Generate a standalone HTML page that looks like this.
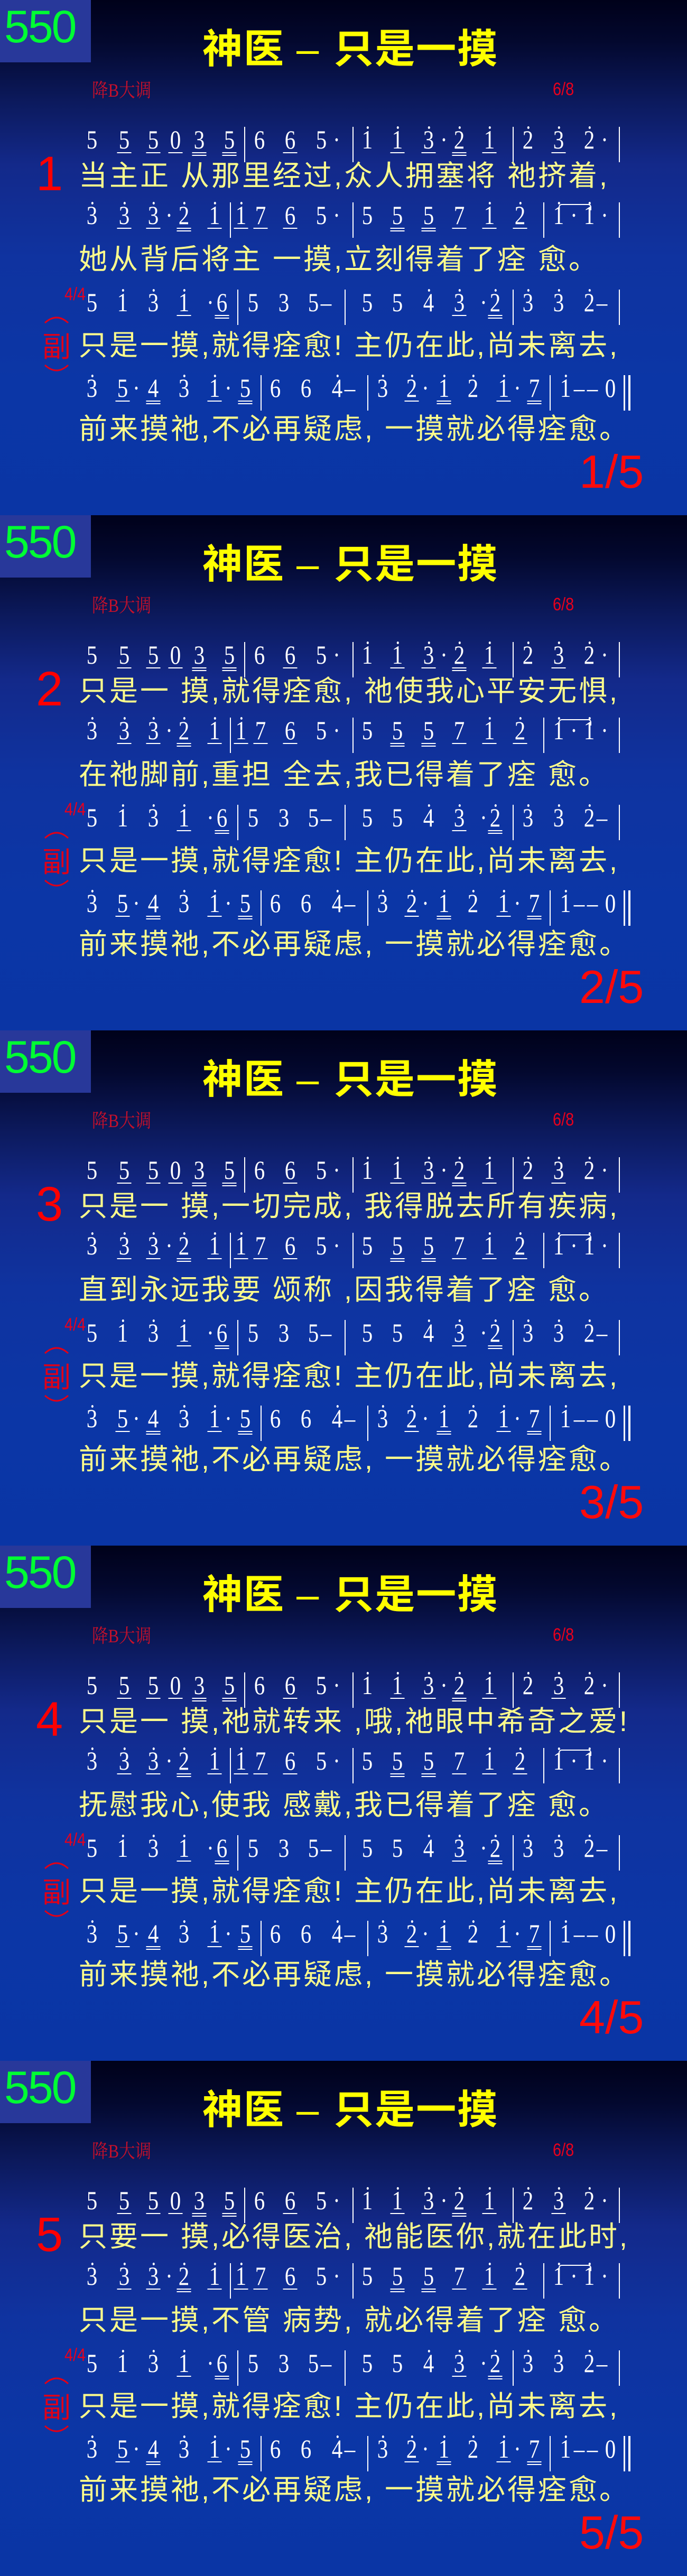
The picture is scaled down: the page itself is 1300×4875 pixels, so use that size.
<!DOCTYPE html>
<html><head><meta charset="utf-8">
<style>
*{margin:0;padding:0}
body{width:1300px;height:4875px;background:#0a3399;overflow:hidden}
.s{position:relative;width:1300px;height:975px;overflow:hidden;
background:linear-gradient(180deg,#00011a 0%,#03082e 8%,#0c1a5e 20%,#13298a 32%,#0f33a0 50%,#0b36a6 75%,#0a35a5 100%)}
.badge{position:absolute;left:0;top:0;width:172px;height:118px;background:#28389a}
.badge span{position:absolute;left:8px;top:8px;font:86px/1 "Liberation Sans",sans-serif;color:#00ff33;letter-spacing:-3px}
.title{position:absolute;left:383px;top:52px;font:bold 76px/1.1 "Liberation Sans","Noto Sans CJK SC",sans-serif;color:#ffff00;white-space:pre;letter-spacing:2px}
.title .dash{font-weight:normal;display:inline-block;margin:0 26px 0 22px}
.key{position:absolute;left:174px;top:150px;font:36px/1.2 "Liberation Serif","Noto Serif CJK SC",serif;color:#c8102a;transform:scaleX(.85);transform-origin:left}
.tm{position:absolute;font:34px/1 "Liberation Sans",sans-serif;color:#e8001c;transform:scaleX(.85);transform-origin:left}
.vn{position:absolute;left:68px;top:283px;font:92px/1 "Liberation Sans",sans-serif;color:#ff0000}
.pg{position:absolute;left:1096px;top:849px;font:88px/1 "Liberation Sans",sans-serif;color:#ff0a0a}
.ly{position:absolute;left:149px;font:54px/54px "Liberation Sans","Noto Sans CJK SC",sans-serif;color:#fbfb8c;white-space:pre;letter-spacing:4px}
.r{position:absolute;left:0;width:1300px;height:70px}
.r b{position:absolute;top:0;font:normal 50px/1 "Liberation Serif",serif;color:#fff;transform:translateX(-50%) scaleX(.82)}
.r b.h::before{content:"";position:absolute;left:50%;top:0px;width:5px;height:5px;margin-left:-2px;border-radius:50%;background:#fff}
.r b.u::after,.r b.d::after{content:"";position:absolute;left:-4px;right:-4px;top:49px;height:2px;background:#fff}
.r b.d::after{height:7px;background:linear-gradient(#fff 0,#fff 2px,transparent 2px,transparent 5px,#fff 5px)}
.r i{position:absolute;top:1px;width:2px;height:67px;background:#fff}
.tie{position:absolute;top:4px;left:1057px;width:58px;height:10px;border:2px solid #fff;border-bottom:none;border-radius:6px 6px 0 0}
.fu{position:absolute;left:79px;top:595px;width:56px;height:112px}
</style></head><body>

<div class="s">
<div class="badge"><span>550</span></div>
<div class="title">神医<span class="dash">–</span>只是一摸</div>
<div class="key">降B大调</div>
<div class="tm" style="left:1046px;top:152px">6/8</div>
<div class="vn">1</div>
<div class="r" style="top:239px"><b style="left:174px">5</b><b class="u" style="left:235px">5</b><b class="u" style="left:290px">5</b><b class="u" style="left:332px">0</b><b class="d" style="left:377px">3</b><b class="d" style="left:434px">5</b><i style="left:462px"></i><b style="left:491px">6</b><b class="u" style="left:549px">6</b><b style="left:608px">5</b><b style="left:637px">·</b><i style="left:667px"></i><b class="h" style="left:695px">1</b><b class="h u" style="left:752px">1</b><b class="h u" style="left:811px">3</b><b style="left:840px">·</b><b class="h d" style="left:869px">2</b><b class="h u" style="left:926px">1</b><i style="left:970px"></i><b class="h" style="left:999px">2</b><b class="h u" style="left:1057px">3</b><b class="h" style="left:1115px">2</b><b style="left:1144px">·</b><i style="left:1171px"></i></div>
<div class="ly" style="top:306px">当主正 从那里经过,众人拥塞将 祂挤着,</div>
<div class="r" style="top:382px"><b class="h" style="left:174px">3</b><b class="h u" style="left:235px">3</b><b class="h u" style="left:290px">3</b><b style="left:320px">·</b><b class="h d" style="left:348px">2</b><b class="h u" style="left:406px">1</b><i style="left:435px"></i><b class="h u" style="left:456px">1</b><b class="u" style="left:493px">7</b><b class="u" style="left:549px">6</b><b style="left:608px">5</b><b style="left:637px">·</b><i style="left:667px"></i><b style="left:695px">5</b><b class="d" style="left:752px">5</b><b class="d" style="left:811px">5</b><b class="u" style="left:869px">7</b><b class="h u" style="left:926px">1</b><b class="h u" style="left:984px">2</b><i style="left:1028px"></i><b class="h" style="left:1057px">1</b><b style="left:1086px">·</b><b class="h" style="left:1115px">1</b><b style="left:1144px">·</b><i style="left:1171px"></i><div class="tie"></div></div>
<div class="ly" style="top:464px">她从背后将主 一摸,立刻得着了痊 愈。</div>
<div class="tm" style="left:122px;top:540px">4/4</div>
<div class="r" style="top:547px"><b style="left:174px">5</b><b class="h" style="left:232px">1</b><b class="h" style="left:290px">3</b><b class="h u" style="left:348px">1</b><b style="left:398px">·</b><b class="d" style="left:420px">6</b><i style="left:449px"></i><b style="left:479px">5</b><b style="left:537px">3</b><b style="left:593px">5</b><b style="left:617px">–</b><i style="left:652px"></i><b style="left:695px">5</b><b style="left:752px">5</b><b class="h" style="left:811px">4</b><b class="h u" style="left:869px">3</b><b style="left:915px">·</b><b class="h d" style="left:937px">2</b><i style="left:970px"></i><b class="h" style="left:999px">3</b><b class="h" style="left:1057px">3</b><b class="h" style="left:1115px">2</b><b style="left:1139px">–</b><i style="left:1171px"></i></div>
<svg class="fu" viewBox="0 0 56 112"><path d="M6 16 Q28 -4 50 16" fill="none" stroke="#e00018" stroke-width="3"/><path d="M6 96 Q28 116 50 96" fill="none" stroke="#e00018" stroke-width="3"/><text x="28" y="80" text-anchor="middle" font-family="Noto Sans CJK SC,sans-serif" font-size="54" fill="#e00018">副</text></svg>
<div class="ly" style="top:627px">只是一摸,就得痊愈! 主仍在此,尚未离去,</div>
<div class="r" style="top:709px"><b class="h" style="left:174px">3</b><b class="u" style="left:232px">5</b><b style="left:258px">·</b><b class="d" style="left:290px">4</b><b class="h" style="left:348px">3</b><b class="h u" style="left:406px">1</b><b style="left:432px">·</b><b class="d" style="left:464px">5</b><i style="left:493px"></i><b style="left:521px">6</b><b style="left:579px">6</b><b class="h" style="left:638px">4</b><b style="left:662px">–</b><i style="left:695px"></i><b class="h" style="left:724px">3</b><b class="h u" style="left:779px">2</b><b style="left:805px">·</b><b class="h d" style="left:840px">1</b><b class="h" style="left:895px">2</b><b class="h u" style="left:953px">1</b><b style="left:979px">·</b><b class="d" style="left:1011px">7</b><i style="left:1040px"></i><b class="h" style="left:1070px">1</b><b style="left:1096px">–</b><b style="left:1121px">–</b><b style="left:1155px">0</b><i style="left:1180px;width:3px"></i><i style="left:1189px;width:4px"></i></div>
<div class="ly" style="top:785px">前来摸祂,不必再疑虑, 一摸就必得痊愈。</div>
<div class="pg">1/5</div>
</div>

<div class="s">
<div class="badge"><span>550</span></div>
<div class="title">神医<span class="dash">–</span>只是一摸</div>
<div class="key">降B大调</div>
<div class="tm" style="left:1046px;top:152px">6/8</div>
<div class="vn">2</div>
<div class="r" style="top:239px"><b style="left:174px">5</b><b class="u" style="left:235px">5</b><b class="u" style="left:290px">5</b><b class="u" style="left:332px">0</b><b class="d" style="left:377px">3</b><b class="d" style="left:434px">5</b><i style="left:462px"></i><b style="left:491px">6</b><b class="u" style="left:549px">6</b><b style="left:608px">5</b><b style="left:637px">·</b><i style="left:667px"></i><b class="h" style="left:695px">1</b><b class="h u" style="left:752px">1</b><b class="h u" style="left:811px">3</b><b style="left:840px">·</b><b class="h d" style="left:869px">2</b><b class="h u" style="left:926px">1</b><i style="left:970px"></i><b class="h" style="left:999px">2</b><b class="h u" style="left:1057px">3</b><b class="h" style="left:1115px">2</b><b style="left:1144px">·</b><i style="left:1171px"></i></div>
<div class="ly" style="top:306px">只是一 摸,就得痊愈, 祂使我心平安无惧,</div>
<div class="r" style="top:382px"><b class="h" style="left:174px">3</b><b class="h u" style="left:235px">3</b><b class="h u" style="left:290px">3</b><b style="left:320px">·</b><b class="h d" style="left:348px">2</b><b class="h u" style="left:406px">1</b><i style="left:435px"></i><b class="h u" style="left:456px">1</b><b class="u" style="left:493px">7</b><b class="u" style="left:549px">6</b><b style="left:608px">5</b><b style="left:637px">·</b><i style="left:667px"></i><b style="left:695px">5</b><b class="d" style="left:752px">5</b><b class="d" style="left:811px">5</b><b class="u" style="left:869px">7</b><b class="h u" style="left:926px">1</b><b class="h u" style="left:984px">2</b><i style="left:1028px"></i><b class="h" style="left:1057px">1</b><b style="left:1086px">·</b><b class="h" style="left:1115px">1</b><b style="left:1144px">·</b><i style="left:1171px"></i><div class="tie"></div></div>
<div class="ly" style="top:464px">在祂脚前,重担 全去,我已得着了痊 愈。</div>
<div class="tm" style="left:122px;top:540px">4/4</div>
<div class="r" style="top:547px"><b style="left:174px">5</b><b class="h" style="left:232px">1</b><b class="h" style="left:290px">3</b><b class="h u" style="left:348px">1</b><b style="left:398px">·</b><b class="d" style="left:420px">6</b><i style="left:449px"></i><b style="left:479px">5</b><b style="left:537px">3</b><b style="left:593px">5</b><b style="left:617px">–</b><i style="left:652px"></i><b style="left:695px">5</b><b style="left:752px">5</b><b class="h" style="left:811px">4</b><b class="h u" style="left:869px">3</b><b style="left:915px">·</b><b class="h d" style="left:937px">2</b><i style="left:970px"></i><b class="h" style="left:999px">3</b><b class="h" style="left:1057px">3</b><b class="h" style="left:1115px">2</b><b style="left:1139px">–</b><i style="left:1171px"></i></div>
<svg class="fu" viewBox="0 0 56 112"><path d="M6 16 Q28 -4 50 16" fill="none" stroke="#e00018" stroke-width="3"/><path d="M6 96 Q28 116 50 96" fill="none" stroke="#e00018" stroke-width="3"/><text x="28" y="80" text-anchor="middle" font-family="Noto Sans CJK SC,sans-serif" font-size="54" fill="#e00018">副</text></svg>
<div class="ly" style="top:627px">只是一摸,就得痊愈! 主仍在此,尚未离去,</div>
<div class="r" style="top:709px"><b class="h" style="left:174px">3</b><b class="u" style="left:232px">5</b><b style="left:258px">·</b><b class="d" style="left:290px">4</b><b class="h" style="left:348px">3</b><b class="h u" style="left:406px">1</b><b style="left:432px">·</b><b class="d" style="left:464px">5</b><i style="left:493px"></i><b style="left:521px">6</b><b style="left:579px">6</b><b class="h" style="left:638px">4</b><b style="left:662px">–</b><i style="left:695px"></i><b class="h" style="left:724px">3</b><b class="h u" style="left:779px">2</b><b style="left:805px">·</b><b class="h d" style="left:840px">1</b><b class="h" style="left:895px">2</b><b class="h u" style="left:953px">1</b><b style="left:979px">·</b><b class="d" style="left:1011px">7</b><i style="left:1040px"></i><b class="h" style="left:1070px">1</b><b style="left:1096px">–</b><b style="left:1121px">–</b><b style="left:1155px">0</b><i style="left:1180px;width:3px"></i><i style="left:1189px;width:4px"></i></div>
<div class="ly" style="top:785px">前来摸祂,不必再疑虑, 一摸就必得痊愈。</div>
<div class="pg">2/5</div>
</div>

<div class="s">
<div class="badge"><span>550</span></div>
<div class="title">神医<span class="dash">–</span>只是一摸</div>
<div class="key">降B大调</div>
<div class="tm" style="left:1046px;top:152px">6/8</div>
<div class="vn">3</div>
<div class="r" style="top:239px"><b style="left:174px">5</b><b class="u" style="left:235px">5</b><b class="u" style="left:290px">5</b><b class="u" style="left:332px">0</b><b class="d" style="left:377px">3</b><b class="d" style="left:434px">5</b><i style="left:462px"></i><b style="left:491px">6</b><b class="u" style="left:549px">6</b><b style="left:608px">5</b><b style="left:637px">·</b><i style="left:667px"></i><b class="h" style="left:695px">1</b><b class="h u" style="left:752px">1</b><b class="h u" style="left:811px">3</b><b style="left:840px">·</b><b class="h d" style="left:869px">2</b><b class="h u" style="left:926px">1</b><i style="left:970px"></i><b class="h" style="left:999px">2</b><b class="h u" style="left:1057px">3</b><b class="h" style="left:1115px">2</b><b style="left:1144px">·</b><i style="left:1171px"></i></div>
<div class="ly" style="top:306px">只是一 摸,一切完成, 我得脱去所有疾病,</div>
<div class="r" style="top:382px"><b class="h" style="left:174px">3</b><b class="h u" style="left:235px">3</b><b class="h u" style="left:290px">3</b><b style="left:320px">·</b><b class="h d" style="left:348px">2</b><b class="h u" style="left:406px">1</b><i style="left:435px"></i><b class="h u" style="left:456px">1</b><b class="u" style="left:493px">7</b><b class="u" style="left:549px">6</b><b style="left:608px">5</b><b style="left:637px">·</b><i style="left:667px"></i><b style="left:695px">5</b><b class="d" style="left:752px">5</b><b class="d" style="left:811px">5</b><b class="u" style="left:869px">7</b><b class="h u" style="left:926px">1</b><b class="h u" style="left:984px">2</b><i style="left:1028px"></i><b class="h" style="left:1057px">1</b><b style="left:1086px">·</b><b class="h" style="left:1115px">1</b><b style="left:1144px">·</b><i style="left:1171px"></i><div class="tie"></div></div>
<div class="ly" style="top:464px">直到永远我要 颂称 ,因我得着了痊 愈。</div>
<div class="tm" style="left:122px;top:540px">4/4</div>
<div class="r" style="top:547px"><b style="left:174px">5</b><b class="h" style="left:232px">1</b><b class="h" style="left:290px">3</b><b class="h u" style="left:348px">1</b><b style="left:398px">·</b><b class="d" style="left:420px">6</b><i style="left:449px"></i><b style="left:479px">5</b><b style="left:537px">3</b><b style="left:593px">5</b><b style="left:617px">–</b><i style="left:652px"></i><b style="left:695px">5</b><b style="left:752px">5</b><b class="h" style="left:811px">4</b><b class="h u" style="left:869px">3</b><b style="left:915px">·</b><b class="h d" style="left:937px">2</b><i style="left:970px"></i><b class="h" style="left:999px">3</b><b class="h" style="left:1057px">3</b><b class="h" style="left:1115px">2</b><b style="left:1139px">–</b><i style="left:1171px"></i></div>
<svg class="fu" viewBox="0 0 56 112"><path d="M6 16 Q28 -4 50 16" fill="none" stroke="#e00018" stroke-width="3"/><path d="M6 96 Q28 116 50 96" fill="none" stroke="#e00018" stroke-width="3"/><text x="28" y="80" text-anchor="middle" font-family="Noto Sans CJK SC,sans-serif" font-size="54" fill="#e00018">副</text></svg>
<div class="ly" style="top:627px">只是一摸,就得痊愈! 主仍在此,尚未离去,</div>
<div class="r" style="top:709px"><b class="h" style="left:174px">3</b><b class="u" style="left:232px">5</b><b style="left:258px">·</b><b class="d" style="left:290px">4</b><b class="h" style="left:348px">3</b><b class="h u" style="left:406px">1</b><b style="left:432px">·</b><b class="d" style="left:464px">5</b><i style="left:493px"></i><b style="left:521px">6</b><b style="left:579px">6</b><b class="h" style="left:638px">4</b><b style="left:662px">–</b><i style="left:695px"></i><b class="h" style="left:724px">3</b><b class="h u" style="left:779px">2</b><b style="left:805px">·</b><b class="h d" style="left:840px">1</b><b class="h" style="left:895px">2</b><b class="h u" style="left:953px">1</b><b style="left:979px">·</b><b class="d" style="left:1011px">7</b><i style="left:1040px"></i><b class="h" style="left:1070px">1</b><b style="left:1096px">–</b><b style="left:1121px">–</b><b style="left:1155px">0</b><i style="left:1180px;width:3px"></i><i style="left:1189px;width:4px"></i></div>
<div class="ly" style="top:785px">前来摸祂,不必再疑虑, 一摸就必得痊愈。</div>
<div class="pg">3/5</div>
</div>

<div class="s">
<div class="badge"><span>550</span></div>
<div class="title">神医<span class="dash">–</span>只是一摸</div>
<div class="key">降B大调</div>
<div class="tm" style="left:1046px;top:152px">6/8</div>
<div class="vn">4</div>
<div class="r" style="top:239px"><b style="left:174px">5</b><b class="u" style="left:235px">5</b><b class="u" style="left:290px">5</b><b class="u" style="left:332px">0</b><b class="d" style="left:377px">3</b><b class="d" style="left:434px">5</b><i style="left:462px"></i><b style="left:491px">6</b><b class="u" style="left:549px">6</b><b style="left:608px">5</b><b style="left:637px">·</b><i style="left:667px"></i><b class="h" style="left:695px">1</b><b class="h u" style="left:752px">1</b><b class="h u" style="left:811px">3</b><b style="left:840px">·</b><b class="h d" style="left:869px">2</b><b class="h u" style="left:926px">1</b><i style="left:970px"></i><b class="h" style="left:999px">2</b><b class="h u" style="left:1057px">3</b><b class="h" style="left:1115px">2</b><b style="left:1144px">·</b><i style="left:1171px"></i></div>
<div class="ly" style="top:306px">只是一 摸,祂就转来 ,哦,祂眼中希奇之爱!</div>
<div class="r" style="top:382px"><b class="h" style="left:174px">3</b><b class="h u" style="left:235px">3</b><b class="h u" style="left:290px">3</b><b style="left:320px">·</b><b class="h d" style="left:348px">2</b><b class="h u" style="left:406px">1</b><i style="left:435px"></i><b class="h u" style="left:456px">1</b><b class="u" style="left:493px">7</b><b class="u" style="left:549px">6</b><b style="left:608px">5</b><b style="left:637px">·</b><i style="left:667px"></i><b style="left:695px">5</b><b class="d" style="left:752px">5</b><b class="d" style="left:811px">5</b><b class="u" style="left:869px">7</b><b class="h u" style="left:926px">1</b><b class="h u" style="left:984px">2</b><i style="left:1028px"></i><b class="h" style="left:1057px">1</b><b style="left:1086px">·</b><b class="h" style="left:1115px">1</b><b style="left:1144px">·</b><i style="left:1171px"></i><div class="tie"></div></div>
<div class="ly" style="top:464px">抚慰我心,使我 感戴,我已得着了痊 愈。</div>
<div class="tm" style="left:122px;top:540px">4/4</div>
<div class="r" style="top:547px"><b style="left:174px">5</b><b class="h" style="left:232px">1</b><b class="h" style="left:290px">3</b><b class="h u" style="left:348px">1</b><b style="left:398px">·</b><b class="d" style="left:420px">6</b><i style="left:449px"></i><b style="left:479px">5</b><b style="left:537px">3</b><b style="left:593px">5</b><b style="left:617px">–</b><i style="left:652px"></i><b style="left:695px">5</b><b style="left:752px">5</b><b class="h" style="left:811px">4</b><b class="h u" style="left:869px">3</b><b style="left:915px">·</b><b class="h d" style="left:937px">2</b><i style="left:970px"></i><b class="h" style="left:999px">3</b><b class="h" style="left:1057px">3</b><b class="h" style="left:1115px">2</b><b style="left:1139px">–</b><i style="left:1171px"></i></div>
<svg class="fu" viewBox="0 0 56 112"><path d="M6 16 Q28 -4 50 16" fill="none" stroke="#e00018" stroke-width="3"/><path d="M6 96 Q28 116 50 96" fill="none" stroke="#e00018" stroke-width="3"/><text x="28" y="80" text-anchor="middle" font-family="Noto Sans CJK SC,sans-serif" font-size="54" fill="#e00018">副</text></svg>
<div class="ly" style="top:627px">只是一摸,就得痊愈! 主仍在此,尚未离去,</div>
<div class="r" style="top:709px"><b class="h" style="left:174px">3</b><b class="u" style="left:232px">5</b><b style="left:258px">·</b><b class="d" style="left:290px">4</b><b class="h" style="left:348px">3</b><b class="h u" style="left:406px">1</b><b style="left:432px">·</b><b class="d" style="left:464px">5</b><i style="left:493px"></i><b style="left:521px">6</b><b style="left:579px">6</b><b class="h" style="left:638px">4</b><b style="left:662px">–</b><i style="left:695px"></i><b class="h" style="left:724px">3</b><b class="h u" style="left:779px">2</b><b style="left:805px">·</b><b class="h d" style="left:840px">1</b><b class="h" style="left:895px">2</b><b class="h u" style="left:953px">1</b><b style="left:979px">·</b><b class="d" style="left:1011px">7</b><i style="left:1040px"></i><b class="h" style="left:1070px">1</b><b style="left:1096px">–</b><b style="left:1121px">–</b><b style="left:1155px">0</b><i style="left:1180px;width:3px"></i><i style="left:1189px;width:4px"></i></div>
<div class="ly" style="top:785px">前来摸祂,不必再疑虑, 一摸就必得痊愈。</div>
<div class="pg">4/5</div>
</div>

<div class="s">
<div class="badge"><span>550</span></div>
<div class="title">神医<span class="dash">–</span>只是一摸</div>
<div class="key">降B大调</div>
<div class="tm" style="left:1046px;top:152px">6/8</div>
<div class="vn">5</div>
<div class="r" style="top:239px"><b style="left:174px">5</b><b class="u" style="left:235px">5</b><b class="u" style="left:290px">5</b><b class="u" style="left:332px">0</b><b class="d" style="left:377px">3</b><b class="d" style="left:434px">5</b><i style="left:462px"></i><b style="left:491px">6</b><b class="u" style="left:549px">6</b><b style="left:608px">5</b><b style="left:637px">·</b><i style="left:667px"></i><b class="h" style="left:695px">1</b><b class="h u" style="left:752px">1</b><b class="h u" style="left:811px">3</b><b style="left:840px">·</b><b class="h d" style="left:869px">2</b><b class="h u" style="left:926px">1</b><i style="left:970px"></i><b class="h" style="left:999px">2</b><b class="h u" style="left:1057px">3</b><b class="h" style="left:1115px">2</b><b style="left:1144px">·</b><i style="left:1171px"></i></div>
<div class="ly" style="top:306px">只要一 摸,必得医治, 祂能医你,就在此时,</div>
<div class="r" style="top:382px"><b class="h" style="left:174px">3</b><b class="h u" style="left:235px">3</b><b class="h u" style="left:290px">3</b><b style="left:320px">·</b><b class="h d" style="left:348px">2</b><b class="h u" style="left:406px">1</b><i style="left:435px"></i><b class="h u" style="left:456px">1</b><b class="u" style="left:493px">7</b><b class="u" style="left:549px">6</b><b style="left:608px">5</b><b style="left:637px">·</b><i style="left:667px"></i><b style="left:695px">5</b><b class="d" style="left:752px">5</b><b class="d" style="left:811px">5</b><b class="u" style="left:869px">7</b><b class="h u" style="left:926px">1</b><b class="h u" style="left:984px">2</b><i style="left:1028px"></i><b class="h" style="left:1057px">1</b><b style="left:1086px">·</b><b class="h" style="left:1115px">1</b><b style="left:1144px">·</b><i style="left:1171px"></i><div class="tie"></div></div>
<div class="ly" style="top:464px">只是一摸,不管 病势, 就必得着了痊 愈。</div>
<div class="tm" style="left:122px;top:540px">4/4</div>
<div class="r" style="top:547px"><b style="left:174px">5</b><b class="h" style="left:232px">1</b><b class="h" style="left:290px">3</b><b class="h u" style="left:348px">1</b><b style="left:398px">·</b><b class="d" style="left:420px">6</b><i style="left:449px"></i><b style="left:479px">5</b><b style="left:537px">3</b><b style="left:593px">5</b><b style="left:617px">–</b><i style="left:652px"></i><b style="left:695px">5</b><b style="left:752px">5</b><b class="h" style="left:811px">4</b><b class="h u" style="left:869px">3</b><b style="left:915px">·</b><b class="h d" style="left:937px">2</b><i style="left:970px"></i><b class="h" style="left:999px">3</b><b class="h" style="left:1057px">3</b><b class="h" style="left:1115px">2</b><b style="left:1139px">–</b><i style="left:1171px"></i></div>
<svg class="fu" viewBox="0 0 56 112"><path d="M6 16 Q28 -4 50 16" fill="none" stroke="#e00018" stroke-width="3"/><path d="M6 96 Q28 116 50 96" fill="none" stroke="#e00018" stroke-width="3"/><text x="28" y="80" text-anchor="middle" font-family="Noto Sans CJK SC,sans-serif" font-size="54" fill="#e00018">副</text></svg>
<div class="ly" style="top:627px">只是一摸,就得痊愈! 主仍在此,尚未离去,</div>
<div class="r" style="top:709px"><b class="h" style="left:174px">3</b><b class="u" style="left:232px">5</b><b style="left:258px">·</b><b class="d" style="left:290px">4</b><b class="h" style="left:348px">3</b><b class="h u" style="left:406px">1</b><b style="left:432px">·</b><b class="d" style="left:464px">5</b><i style="left:493px"></i><b style="left:521px">6</b><b style="left:579px">6</b><b class="h" style="left:638px">4</b><b style="left:662px">–</b><i style="left:695px"></i><b class="h" style="left:724px">3</b><b class="h u" style="left:779px">2</b><b style="left:805px">·</b><b class="h d" style="left:840px">1</b><b class="h" style="left:895px">2</b><b class="h u" style="left:953px">1</b><b style="left:979px">·</b><b class="d" style="left:1011px">7</b><i style="left:1040px"></i><b class="h" style="left:1070px">1</b><b style="left:1096px">–</b><b style="left:1121px">–</b><b style="left:1155px">0</b><i style="left:1180px;width:3px"></i><i style="left:1189px;width:4px"></i></div>
<div class="ly" style="top:785px">前来摸祂,不必再疑虑, 一摸就必得痊愈。</div>
<div class="pg">5/5</div>
</div>

</body></html>
